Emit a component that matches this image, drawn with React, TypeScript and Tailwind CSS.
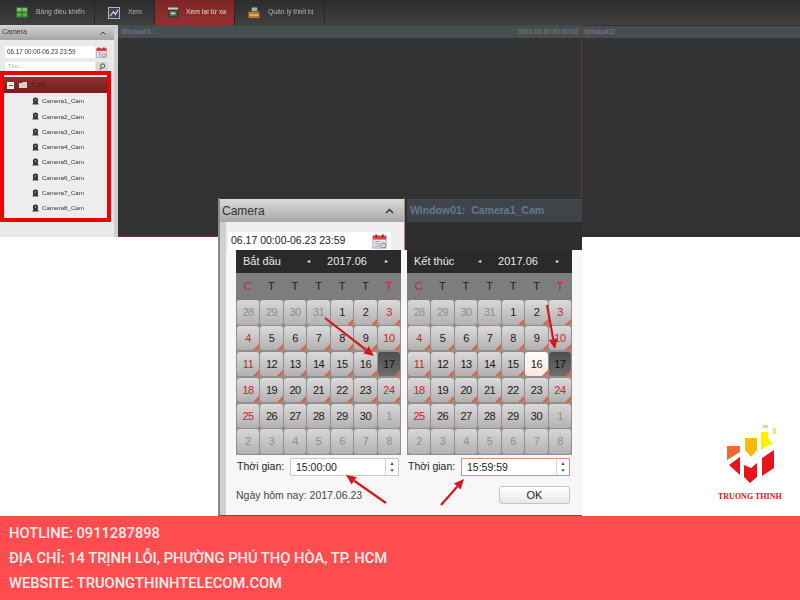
import React from "react";

const SANS = "font-['Liberation_Sans',Arial,sans-serif]";

function NavIcon({ kind }: { kind: number }) {
  if (kind === 0)
    return (
      <svg width="12" height="11" viewBox="0 0 13 12" className="shrink-0">
        <rect x="0" y="0" width="13" height="12" fill="#2c6a34" />
        <rect x="1" y="1" width="5" height="4" fill="#7cc35a" />
        <rect x="7" y="1" width="5" height="4" fill="#7cc35a" />
        <rect x="1" y="6.5" width="5" height="4" fill="#5aa84a" />
        <rect x="7" y="6.5" width="5" height="4" fill="#5aa84a" />
      </svg>
    );
  if (kind === 1)
    return (
      <svg width="12" height="12" viewBox="0 0 13 13" className="shrink-0">
        <rect x="0.5" y="0.5" width="12" height="12" fill="#3b4654" stroke="#b9c0c8" />
        <path d="M2 10 L6 5 L8 8 L11 3" stroke="#e8e8e8" strokeWidth="1.2" fill="none" />
      </svg>
    );
  if (kind === 2)
    return (
      <svg width="10" height="11" viewBox="0 0 12 12" className="shrink-0">
        <rect x="0" y="0" width="12" height="12" fill="#2f3a34" />
        <rect x="0" y="0" width="12" height="2.5" fill="#c9cfd0" />
        <rect x="1.5" y="4" width="9" height="6.5" fill="#4c6c52" />
        <path d="M3 7 L6 5 V6.3 H9 V7.8 H6 V9 Z" fill="#d8e4cc" />
      </svg>
    );
  return (
    <svg width="12" height="12" viewBox="0 0 13 13" className="shrink-0">
      <rect x="4" y="0.5" width="6" height="4" fill="#a9b0b8" />
      <rect x="0.5" y="5" width="12" height="7" fill="#b5762e" />
      <rect x="1.5" y="8" width="10" height="1.5" fill="#e8c070" />
    </svg>
  );
}

function CamIcon() {
  return (
    <svg width="7" height="8" viewBox="0 0 7 8" className="shrink-0">
      <circle cx="3.5" cy="3" r="2.6" fill="#2b2b2b" />
      <circle cx="3.5" cy="3" r="1" fill="#9a9a9a" />
      <path d="M0.4 7.6 L1.4 4.8 H5.6 L6.6 7.6 Z" fill="#3a3a3a" />
    </svg>
  );
}

function CalendarIcon({ size }: { size: number }) {
  return (
    <svg width={size} height={size} viewBox="0 0 16 16" className="shrink-0">
      <rect x="1" y="2" width="14" height="13" fill="#eef0f4" stroke="#9aa0a8" />
      <rect x="1" y="2" width="14" height="4" fill="#d9433f" />
      <rect x="3.5" y="0.5" width="2" height="3" fill="#8a2a28" />
      <rect x="10.5" y="0.5" width="2" height="3" fill="#8a2a28" />
      <path d="M3 8 H9 M3 10.5 H9 M3 13 H9" stroke="#8a97a8" strokeWidth="1" />
      <circle cx="12" cy="12" r="2.6" fill="#fff" stroke="#555" strokeWidth="0.8" />
      <path d="M12 10.5 V12 H13.2" stroke="#555" strokeWidth="0.6" fill="none" />
    </svg>
  );
}

const CAMS = ["Camera1_Cam", "Camera2_Cam", "Camera3_Cam", "Camera4_Cam", "Camera5_Cam", "Camera6_Cam", "Camera7_Cam", "Camera8_Cam"];
const NAV = [
  { label: "Bảng điều khiển", w: "w-[95px]", icon: 0, pl: "pl-[16px]" },
  { label: "Xem", w: "w-[60px]", icon: 1, pl: "pl-[13px]" },
  { label: "Xem lại từ xa", w: "w-[80px]", icon: 2, pl: "pl-[13px]", active: true },
  { label: "Quản lý thiết bị", w: "w-[90px]", icon: 3, pl: "pl-[13px]" },
];

function TopScreen() {
  return (
    <div className={`h-[237px] w-full flex flex-col bg-[#333333] ${SANS}`}>
      <div className="h-[25px] shrink-0 flex bg-gradient-to-b from-[#2c2c2c] to-[#404040]">
        {NAV.map((n) => (
          <div
            key={n.label}
            className={`${n.w} h-full flex items-center ${n.pl} gap-[8px] border-r border-[#262626] ${
              n.active ? "bg-gradient-to-b from-[#7e2626] to-[#94302f] text-[#e6d4d4]" : "text-[#b4b4b4]"
            }`}
          >
            <NavIcon kind={n.icon} />
            <span className="text-[6.8px] whitespace-nowrap blur-[0.3px]">{n.label}</span>
          </div>
        ))}
      </div>
      <div className="flex-1 flex min-h-0">
        <div className="w-[118px] shrink-0 bg-[#e9e9e9] flex flex-col border-r-[4px] border-[#cfcfcf]">
          <div className="h-[15px] shrink-0 bg-gradient-to-b from-[#d4d4d4] to-[#a4a4a4] flex items-center justify-between px-[2px] pr-[8px]">
            <span className="text-[7px] text-[#333333] blur-[0.2px]">Camera</span>
            <svg width="6" height="4" viewBox="0 0 6 4"><path d="M0.5 3.5 L3 1 L5.5 3.5" stroke="#444" fill="none" /></svg>
          </div>
          <div className="flex items-center gap-[1px] pl-[5px] mt-[6px]">
            <div className="w-[90px] h-[12px] bg-white flex items-center pl-[2px] text-[6.3px] text-[#333333] blur-[0.2px]">06.17 00:00-06.23 23:59</div>
            <CalendarIcon size={11} />
          </div>
          <div className="flex items-center gap-[1px] pl-[5px] mt-[4px]">
            <div className="w-[90px] h-[9px] bg-white flex items-center pl-[3px] text-[6px] text-[#aaaaaa] blur-[0.2px]">Tìm...</div>
            <div className="w-[12px] h-[9px] bg-[#d6d6d6] flex items-center justify-center">
              <svg width="7" height="8" viewBox="0 0 7 8"><circle cx="3.6" cy="3" r="2.1" stroke="#555" fill="none" /><path d="M2.3 4.8 L1 7" stroke="#555" /></svg>
            </div>
          </div>
          <div className="w-[111px] h-[151px] border-[4px] border-[#f00000] flex flex-col pt-[2px] bg-[#ededed] shrink-0">
            <div className="h-[16px] w-full shrink-0 bg-gradient-to-b from-[#8e3130] to-[#74201f] flex items-center pl-[3px] gap-[3px]">
              <div className="w-[7px] h-[7px] bg-[#eeeeee] flex items-center justify-center">
                <div className="w-[4px] h-[1px] bg-[#555555]" />
              </div>
              <svg width="8" height="6" viewBox="0 0 8 6" className="ml-[2px]"><path d="M0 1 H3 L4 0 H8 V6 H0 Z" fill="#d4d4c8" /></svg>
              <span className="text-[6.5px] text-[#5e1010] ml-[2px]">Cam</span>
            </div>
            <div className="flex flex-col pt-[0.5px]">
              {CAMS.map((c) => (
                <div key={c} className="h-[15.25px] pl-[28px] flex items-center gap-[3px]">
                  <CamIcon />
                  <span className="text-[6.2px] text-[#333333] blur-[0.2px]">{c}</span>
                </div>
              ))}
            </div>
          </div>
        </div>
        <div className="flex-1 flex flex-col border border-[#6e3436] border-l-0 min-w-0">
          <div className="h-[12px] bg-[#484d52] flex items-center justify-between px-[3px] text-[6.5px] text-[#76838e] blur-[0.2px]">
            <span>Window01:</span>
            <span>0000-00-00 00:00:00</span>
          </div>
          <div className="flex-1 bg-[#333333]" />
        </div>
        <div className="w-[218px] shrink-0 flex flex-col">
          <div className="h-[13px] bg-[#484d52] flex items-center px-[2px] text-[6.5px] text-[#76838e] blur-[0.2px] border-t border-[#333333]">
            <span>Window02:</span>
          </div>
          <div className="flex-1 bg-[#333333]" />
        </div>
      </div>
    </div>
  );
}

const PREV_START = [28, 29, 30, 31];

type Cell = { d: number; muted?: boolean };
function buildCells(): Cell[] {
  const out: Cell[] = PREV_START.map((d) => ({ d, muted: true }));
  for (let d = 1; d <= 30; d++) out.push({ d });
  for (let d = 1; d <= 8; d++) out.push({ d, muted: true });
  return out;
}

function Calendar({ title, highlight }: { title: string; highlight?: boolean }) {
  const cells = buildCells();
  return (
    <div className="w-[165px] shrink-0">
      <div className="h-[23px] bg-[#2a2a2a] flex items-center text-[#e8e8e8] text-[11px] pl-[7px]">
        <span className="w-[64px] whitespace-nowrap">{title}</span>
        <span className="text-[6px] w-[14px]">◂</span>
        <span className="w-[52px] text-center">2017.06</span>
        <span className="text-[6px] pl-[12px]">▸</span>
      </div>
      <div className="h-[27px] bg-[#7d7d7d] grid grid-cols-7 items-center text-center text-[11px] text-[#222222]">
        {["C", "T", "T", "T", "T", "T", "T"].map((t, i) => (
          <span key={i} className={i === 0 || i === 6 ? "text-[#c0282c]" : ""}>{t}</span>
        ))}
      </div>
      <div className="h-[155px] bg-[#8f8f8f] grid grid-cols-7 grid-rows-6 gap-[1.4px] p-[1px] pt-0">
        {cells.map((c, i) => {
          const col = i % 7;
          const weekend = (col === 0 || col === 6) && !c.muted;
          const selected = !c.muted && c.d === 17;
          const light = highlight && !c.muted && c.d === 16;
          const tri = !c.muted && c.d <= 24;
          return (
            <div
              key={i}
              className={`relative flex items-center justify-center text-[11px] tracking-[-0.5px] rounded-[3px] overflow-hidden ${
                selected
                  ? "bg-gradient-to-b from-[#4e4e4e] to-[#6e6e6e] text-[#111111]"
                  : light
                  ? "bg-gradient-to-b from-[#ffffff] to-[#fbe6e2] text-[#222222]"
                  : c.muted
                  ? "bg-gradient-to-b from-[#d8d6d6] to-[#b4b2b2] text-[#8f8f8f]"
                  : "bg-gradient-to-b from-[#dcdada] to-[#b2b0b0]"
              } ${!selected && !light && !c.muted ? (weekend ? "text-[#d0212b]" : "text-[#1a1a1a]") : ""}`}
            >
              {c.d}
              {tri && (
                <svg width="6" height="6" viewBox="0 0 7 7" className="absolute right-0 bottom-0">
                  <path d="M7 0 V7 H0 Z" fill="#e2623f" />
                </svg>
              )}
            </div>
          );
        })}
      </div>
    </div>
  );
}

function TimeField({ value, red }: { value: string; red?: boolean }) {
  return (
    <div className="flex items-center mt-[3px] h-[18px] w-[165px] text-[10.5px] text-[#222222]">
      <span className="w-[54px] pl-[1px] whitespace-nowrap">Thời gian:</span>
      <div className={`w-[109px] h-[18px] flex border bg-white ${red ? "border-[#e08a80]" : "border-[#c8c8c8]"}`}>
        <span className="flex-1 pl-[5px] leading-[16px]">{value}</span>
        <div className="w-[13px] border-l border-[#d4d4d4] flex flex-col items-center justify-center text-[5px] leading-[7px] text-[#444444]">
          <span>▲</span>
          <span>▼</span>
        </div>
      </div>
    </div>
  );
}

function Logo() {
  return (
    <svg width="54" height="60" viewBox="0 0 54 60" className="shrink-0">
      <polygon points="1,22 14,22 14,28 1,36" fill="#ee6a35" />
      <polygon points="19,14 31,14 31,26 25,33 19,26" fill="#fdb90d" />
      <polygon points="35,8 42,8 42,14 47,20 41,22 35,26" fill="#fff000" />
      <rect x="37" y="1" width="5" height="3" fill="#f3d84a" />
      <rect x="47" y="4" width="3" height="6" fill="#f3e86a" />
      <polygon points="3,41 14,33 14,51" fill="#e8141c" />
      <polygon points="18,41 25,44 31,39 31,53 24,59 18,53" fill="#e8141c" />
      <polygon points="36,34 48,26 48,44 36,52" fill="#e8141c" />
    </svg>
  );
}

function Arrow({ x1, y1, x2, y2 }: { x1: number; y1: number; x2: number; y2: number }) {
  const a = Math.atan2(y2 - y1, x2 - x1);
  const l = 10;
  const w = 4.5;
  const bx = x2 - l * Math.cos(a);
  const by = y2 - l * Math.sin(a);
  const px = -Math.sin(a) * w;
  const py = Math.cos(a) * w;
  return (
    <g>
      <line x1={x1} y1={y1} x2={bx} y2={by} stroke="#d8141c" strokeWidth="2.2" />
      <polygon points={`${x2},${y2} ${bx + px},${by + py} ${bx - px},${by - py}`} fill="#d8141c" />
    </g>
  );
}

function Overlay() {
  return (
    <div className={`absolute left-[218px] top-[198px] w-[364px] h-[318px] flex flex-col ${SANS}`}>
      <div className="h-[52px] flex shrink-0">
        <div className="w-[186px] shrink-0 bg-[#eeeeee] border-l-[2px] border-[#8a8a8a] flex flex-col">
          <div className="h-[24px] shrink-0 bg-gradient-to-b from-[#dcdcdc] to-[#a6a6a6] border-t border-[#333333] flex items-center justify-between pl-[2px] pr-[10px] text-[12px] text-[#333333]">
            <span>Camera</span>
            <svg width="9" height="6" viewBox="0 0 9 6"><path d="M1 5 L4.5 1.5 L8 5" stroke="#333" strokeWidth="1.5" fill="none" /></svg>
          </div>
          <div className="flex-1 flex">
            <div className="w-[6px] shrink-0 bg-[#d0d0d0]" />
            <div className="pl-[2px] pt-[10px]">
              <div className="w-[163px] h-[18px] bg-white flex items-center justify-between pl-[3px] pr-[4px] text-[10.5px] text-[#222222] whitespace-nowrap">
                <span>06.17 00:00-06.23 23:59</span>
                <CalendarIcon size={15} />
              </div>
            </div>
          </div>
        </div>
        <div className="flex-1 bg-[#2e2e2e] border-l border-[#c08080] pl-[2px] flex flex-col">
          <div className="h-[23px] mt-[1px] bg-[#3f4449] border-t border-[#70393b] flex items-center pl-[3px] text-[10.5px] font-bold text-[#63788c] whitespace-nowrap">
            Window01:&nbsp;&nbsp;Camera1_Cam
          </div>
        </div>
      </div>
      <div className="flex-1 flex bg-[#f7f7f7] border-l-[2px] border-[#8a8a8a] border-b border-b-[#555555] min-h-0">
        <div className="w-[6px] bg-[#d0d0d0] shrink-0" />
        <div className="pl-[10px] flex gap-[6px]">
          <div>
            <Calendar title="Bắt đầu" />
            <TimeField value="15:00:00" />
            <div className="mt-[12px] text-[10.5px] text-[#444444] whitespace-nowrap">Ngày hôm nay: 2017.06.23</div>
          </div>
          <div>
            <Calendar title="Kết thúc" highlight />
            <TimeField value="15:59:59" red />
            <div className="mt-[10px] ml-[92px] w-[71px] h-[18px] rounded-[3px] border border-[#c4c4c4] bg-gradient-to-b from-[#ffffff] to-[#e8e8e8] flex items-center justify-center text-[11px] text-[#222222]">OK</div>
          </div>
        </div>
      </div>
    </div>
  );
}

export default function App() {
  return (
    <div className="relative w-[800px] h-[600px] bg-white overflow-hidden flex flex-col">
      <TopScreen />
      <div className="flex-1" />
      <div className="h-[84px] shrink-0 bg-[#ff4d4f] pl-[9px] pt-[5px] flex flex-col font-['Roboto',sans-serif] font-medium text-[14.7px] leading-[25px] text-[#fdf0ee] whitespace-nowrap">
        <div>HOTLINE: 0911287898</div>
        <div>ĐỊA CHỈ: 14 TRỊNH LỖI, PHƯỜNG PHÚ THỌ HÒA, TP. HCM</div>
        <div>WEBSITE: TRUONGTHINHTELECOM.COM</div>
      </div>
      <Overlay />
      <svg className="absolute left-0 top-0 pointer-events-none" width="800" height="600" viewBox="0 0 800 600">
        <Arrow x1={325} y1={318} x2={374} y2={356} />
        <Arrow x1={547} y1={305} x2={555} y2={349} />
        <Arrow x1={386} y1={503} x2={346} y2={475} />
        <Arrow x1={441} y1={505} x2={464} y2={479} />
      </svg>
      <div className="absolute left-[726px] top-[424px] flex flex-col items-start">
        <Logo />
        <div className="mt-[8px] -ml-[8px] font-['Liberation_Serif',serif] font-bold text-[8px] leading-[9px] text-[#d8141c] whitespace-nowrap">TRUONG THINH</div>
      </div>
    </div>
  );
}
